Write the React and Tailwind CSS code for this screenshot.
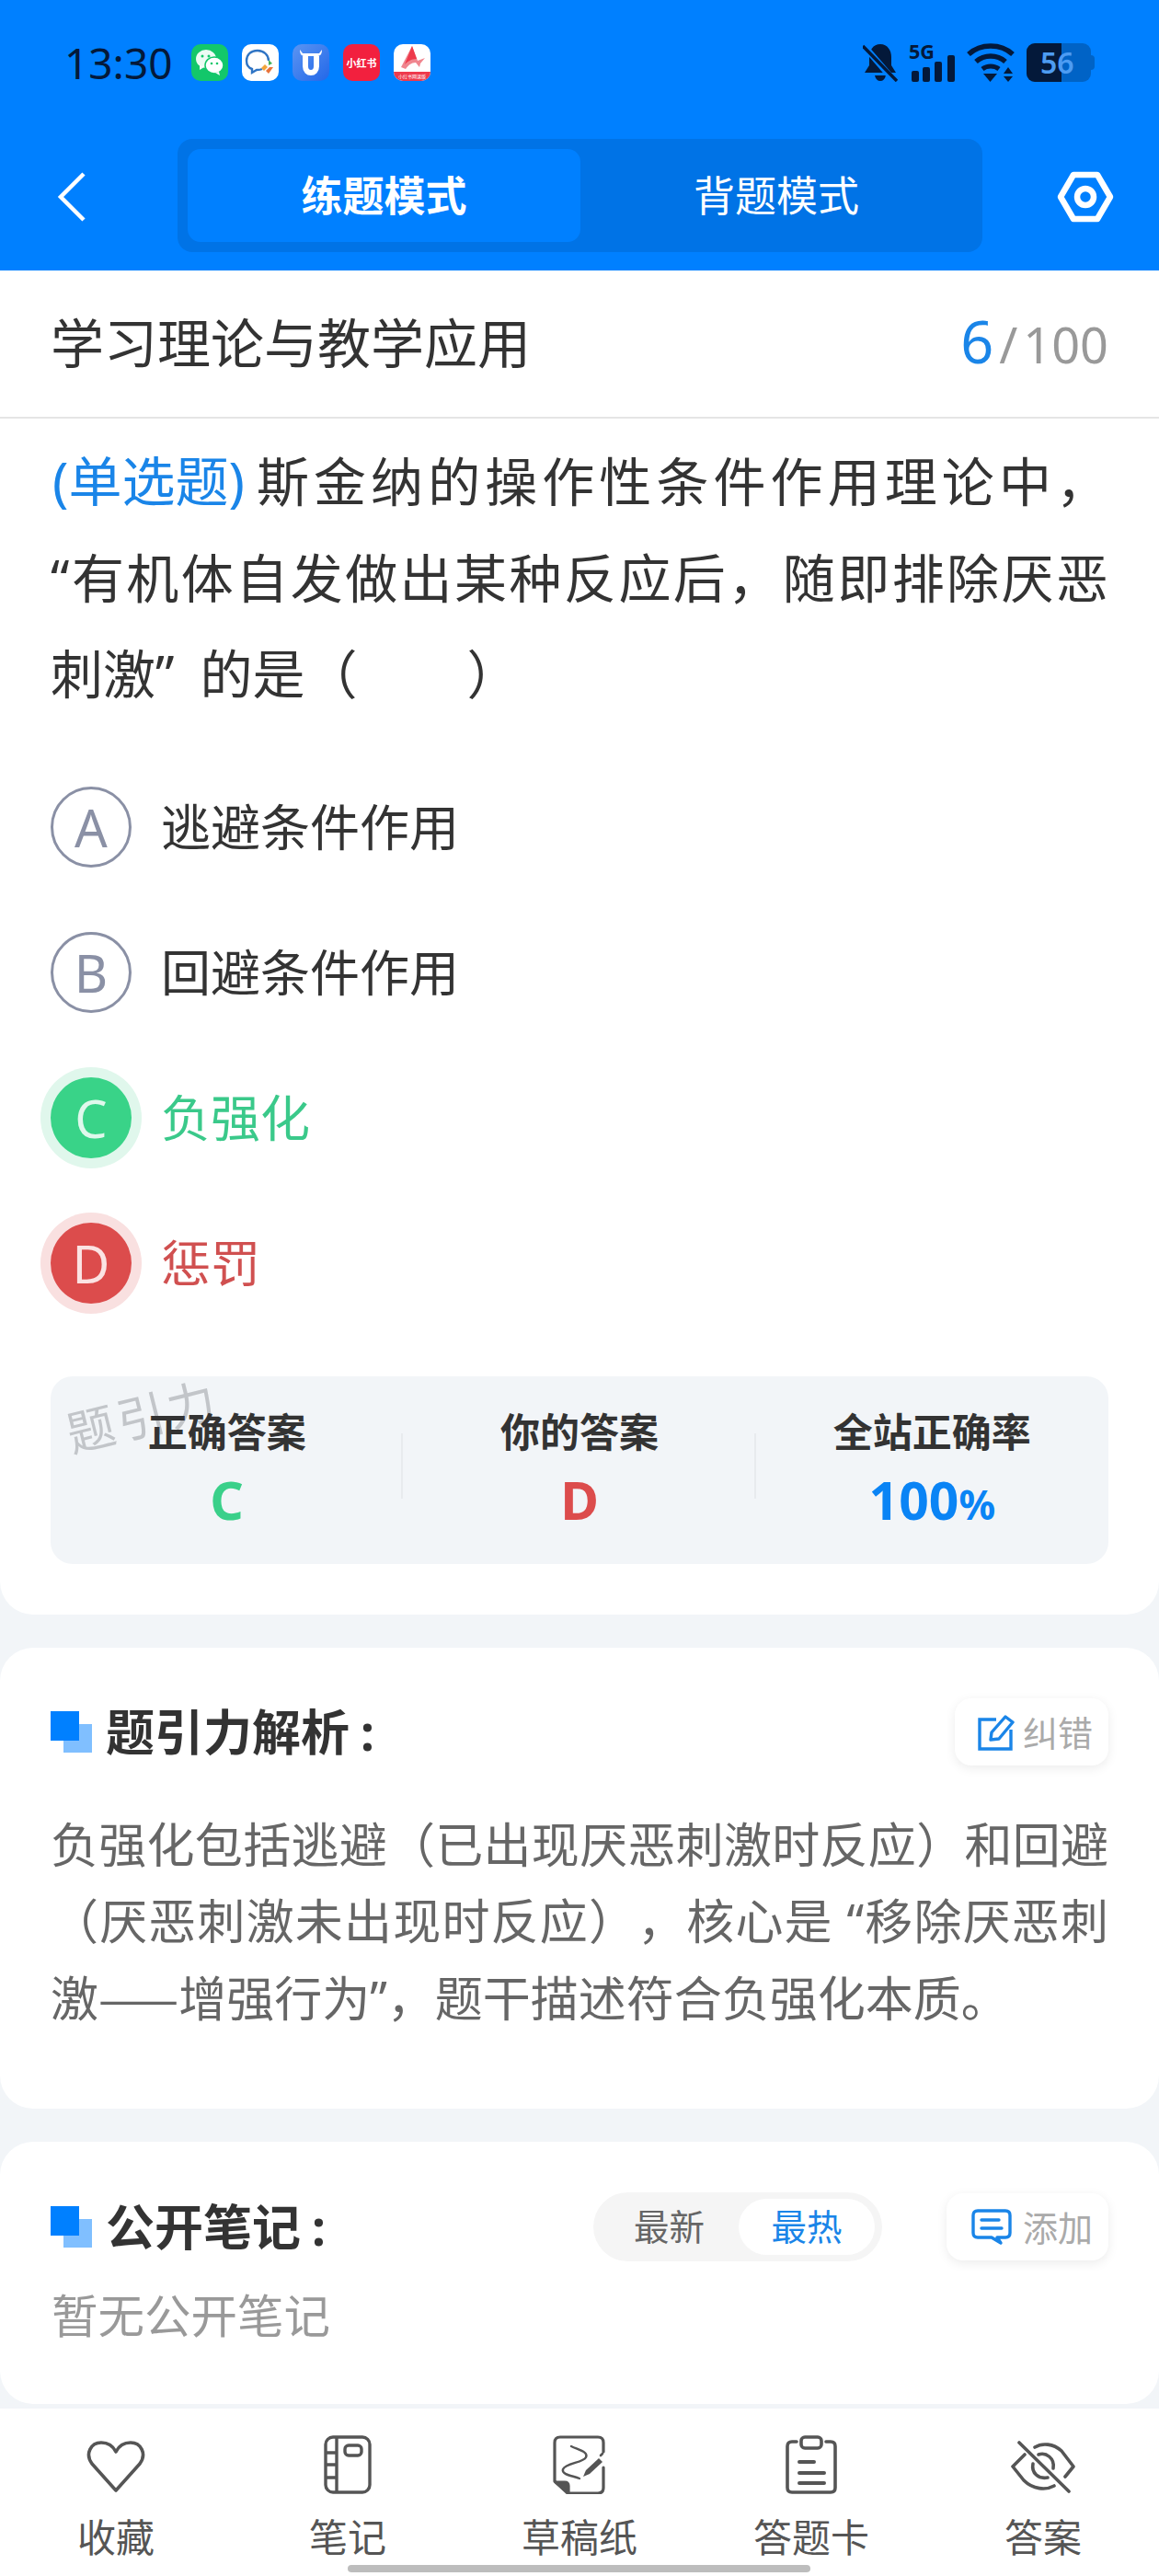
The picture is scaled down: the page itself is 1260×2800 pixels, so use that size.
import React from "react";

const DARK = "#04193a";

function Back() {
  return (
    <svg width="32" height="56" viewBox="0 0 32 56" fill="none">
      <path d="M29 3 L4 28 L29 53" stroke="#fff" strokeWidth="4.5" />
    </svg>
  );
}

function Hex() {
  return (
    <svg width="62" height="56" viewBox="0 0 62 56" fill="none" stroke="#fff" strokeWidth="6.5" strokeLinejoin="round">
      <path d="M4 28 L18 4 H44 L58 28 L44 52 H18 Z" />
      <circle cx="31" cy="28" r="9" />
    </svg>
  );
}

function WeChat() {
  return (
    <div className="w-10 h-10 rounded-[10px] bg-[#13c76a] flex items-center justify-center">
      <svg width="32" height="30" viewBox="0 0 32 30">
        <ellipse cx="12" cy="11" rx="11" ry="10" fill="#fff" opacity="0.92" />
        <path d="M5 18 L5 23 L10 20 Z" fill="#fff" opacity="0.92" />
        <ellipse cx="21" cy="18" rx="10" ry="9" fill="#fff" stroke="#13c76a" strokeWidth="1.5" />
        <path d="M26 25 L27 29 L22 26 Z" fill="#fff" />
        <circle cx="8" cy="8" r="1.5" fill="#13c76a" />
        <circle cx="15" cy="8" r="1.5" fill="#13c76a" />
        <circle cx="18" cy="16" r="1.3" fill="#13c76a" />
        <circle cx="24" cy="16" r="1.3" fill="#13c76a" />
      </svg>
    </div>
  );
}

function QQMail() {
  return (
    <div className="w-10 h-10 rounded-[10px] bg-white flex items-center justify-center">
      <svg width="34" height="32" viewBox="0 0 34 32" fill="none">
        <path d="M14 3 C6 3 2 8 2 14 C2 19 5 22 8 23 L8 27 L13 24 C15 24 17 24 19 23" stroke="#2f74c4" strokeWidth="2.4" />
        <path d="M14 3 C21 3 26 8 26 14" stroke="#2f74c4" strokeWidth="2.4" />
        <path d="M26 13 L30 17 L26 19 Z" fill="#43b05c" />
        <path d="M22 18 L25 21 L21 25 L18 22 Z" fill="#f2a33a" />
        <path d="M27 21 L31 21 L26 28 L23 25 Z" fill="#e8733a" />
      </svg>
    </div>
  );
}

function Cow() {
  return (
    <div className="w-10 h-10 rounded-[10px] bg-gradient-to-br from-[#5a94f2] to-[#2267e8] flex items-center justify-center">
      <svg width="30" height="32" viewBox="0 0 30 32" fill="none">
        <path d="M3 2 C3 7 5 9 8 9 H22 C25 9 27 7 27 2 L24 6 H6 Z" fill="#fff" />
        <path d="M9 9 V20 C9 25 12 27 15 27 C18 27 21 25 21 20 V9" stroke="#fff" strokeWidth="6" />
      </svg>
    </div>
  );
}

function RedBook() {
  return (
    <div className="w-10 h-10 rounded-[10px] bg-[#f2203e] flex items-center justify-center text-white text-[11px] font-bold leading-none whitespace-nowrap">
      小红书
    </div>
  );
}

function RedA() {
  return (
    <div className="w-10 h-10 rounded-[10px] bg-white overflow-hidden flex flex-col">
      <div className="h-[30px] flex items-center justify-center">
        <svg width="30" height="28" viewBox="0 0 30 28">
          <path d="M15 1 L21 17 L29 14 L24 20 L23 24 L19 19 C14 19 11 22 8 26 L3 24 Z" fill="#f0868f" />
          <path d="M15 1 L20 15 C14 15 10 18 7 21 Z" fill="#ee3a4c" />
        </svg>
      </div>
      <div className="h-[10px] bg-[#ee3a4c] text-white text-[5px] leading-[10px] text-center whitespace-nowrap">小红书网课版</div>
    </div>
  );
}

function Bell() {
  return (
    <svg width="38" height="42" viewBox="0 0 38 42">
      <path d="M19 1 C27 1 31 8 31 15 V24 L36 32 H2 L7 24 V15 C7 8 11 1 19 1 Z" fill={DARK} />
      <path d="M13 35 H25 C24 39 22 41 19 41 C16 41 14 39 13 35 Z" fill={DARK} />
      <path d="M4 6 L35 42" stroke="#0080ff" strokeWidth="7" />
      <path d="M0 3 L37 41" stroke={DARK} strokeWidth="3.5" />
    </svg>
  );
}

function Signal() {
  return (
    <svg width="50" height="42" viewBox="0 0 50 42" className="overflow-visible">
      <text x="0" y="17" fontSize="22" fontWeight="700" fill={DARK} fontFamily="'Noto Sans', sans-serif" textLength="28" lengthAdjust="spacingAndGlyphs">5G</text>
      <rect x="3" y="30" width="8" height="12" rx="2" fill={DARK} />
      <rect x="15" y="26" width="8" height="16" rx="2" fill={DARK} />
      <rect x="28" y="20" width="8" height="22" rx="2" fill={DARK} />
      <rect x="42" y="13" width="8" height="29" rx="2" fill={DARK} />
    </svg>
  );
}

function Wifi() {
  return (
    <svg width="54" height="42" viewBox="0 0 54 42" fill="none">
      <path d="M3 12 C16 0 38 0 51 12" stroke={DARK} strokeWidth="5.5" />
      <path d="M11 20 C20 12 34 12 43 20" stroke={DARK} strokeWidth="5.5" />
      <path d="M18 28 C23 24 31 24 36 28" stroke={DARK} strokeWidth="5" />
      <path d="M19 33 H34 L26.5 42 Z" fill={DARK} />
      <path d="M41 33 L46 26 L51 33 Z" fill={DARK} />
      <path d="M41 36 H51 L46 42 Z" fill={DARK} />
    </svg>
  );
}

function Battery() {
  return (
    <div className="relative w-[74px] h-[42px] flex items-center">
      <div className="w-[70px] h-[42px] rounded-[9px] overflow-hidden flex bg-[#0063c6]">
        <div className="w-[38px] h-full bg-[#04193a]" />
      </div>
      <div className="w-1 h-[16px] rounded-r bg-[#0063c6]" />
      <span className="absolute left-[15px] top-0 h-[42px] leading-[42px] text-[32px] font-semibold text-[#4d9cf2]">56</span>
    </div>
  );
}

function EditIcon() {
  return (
    <svg width="40" height="40" viewBox="0 0 40 40" fill="none" stroke="#1a85e8" strokeWidth="3.4">
      <path d="M20 6 H2 V38 H36 V17" />
      <path d="M15 20 L30 3 L38 9 L23 27 L14 28 Z" strokeLinejoin="round" />
    </svg>
  );
}

function CommentIcon() {
  return (
    <svg width="44" height="40" viewBox="0 0 44 40" fill="none" stroke="#1a85e8" strokeWidth="3.4" strokeLinecap="round" strokeLinejoin="round">
      <path d="M7 2 H37 Q42 2 42 7 V26 Q42 31 37 31 H28 L32 37 L22 31 H7 Q2 31 2 26 V7 Q2 2 7 2 Z" />
      <path d="M11 12 H30 M11 21 H33" />
    </svg>
  );
}

function Heart() {
  return (
    <svg width="66" height="58" viewBox="0 0 66 58" fill="none" stroke="#555" strokeWidth="3.6" strokeLinejoin="round">
      <path d="M33 55 L7 26 C-1 15 6 3 17 3 C24 3 30 7 33 13 C36 7 42 3 49 3 C60 3 67 15 59 26 Z" />
    </svg>
  );
}

function Notebook() {
  return (
    <svg width="52" height="64" viewBox="0 0 52 64" fill="none" stroke="#555" strokeWidth="3.4">
      <rect x="2" y="2" width="48" height="60" rx="8" />
      <path d="M14 2 V62 M2 19 H14 M2 32 H14 M2 46 H14" />
      <rect x="23" y="11" width="18" height="11" rx="4" />
    </svg>
  );
}

function Draft() {
  return (
    <svg width="58" height="64" viewBox="0 0 58 64" fill="none" stroke="#555" strokeWidth="3.2" strokeLinejoin="round" strokeLinecap="round">
      <path d="M55 18 V8 Q55 2 49 2 H8 Q2 2 2 8 V50 L16 63 H49 Q55 63 55 57 V35" />
      <path d="M3 51 H13 Q17 51 17 55 V62 Z" fill="#555" />
      <path d="M20 12 C28 16 39 18 36 24 C33 30 14 30 11 37 C9 43 22 44 29 47" strokeWidth="2.4" />
      <path d="M33 45 L36 38 L50 25 L54 29 L40 42 Z" fill="#555" stroke="none" />
      <path d="M52 22 L54 20" strokeWidth="2.6" />
    </svg>
  );
}

function Clipboard() {
  return (
    <svg width="56" height="64" viewBox="0 0 56 64" fill="none" stroke="#555" strokeWidth="3.6" strokeLinecap="round" strokeLinejoin="round">
      <path d="M12 7 H7 Q2 7 2 12 V57 Q2 62 7 62 H49 Q54 62 54 57 V12 Q54 7 49 7 H44" />
      <rect x="17" y="2" width="22" height="12" rx="4" />
      <path d="M15 29 H31 M15 41 H42 M15 52 H42" strokeWidth="4" />
    </svg>
  );
}

function EyeOff() {
  return (
    <svg width="70" height="58" viewBox="0 0 70 58" fill="none" stroke="#555" strokeWidth="3.6" strokeLinecap="round" strokeLinejoin="round">
      <path d="M9 3 L63 56" />
      <path d="M26 8 C34 3 46 4 55 12 L68 29 L59 40" />
      <path d="M15 16 L2 29 L14 44 C24 54 38 55 47 50" />
      <path d="M30 16 C38 13 48 20 46 31" />
      <path d="M24 26 C22 36 30 43 40 41" />
    </svg>
  );
}

function SectionIcon() {
  return (
    <div className="relative w-[45px] h-[45px] shrink-0">
      <div className="absolute left-[14px] top-[14px] w-[31px] h-[31px] bg-[#80bfff]" />
      <div className="absolute left-0 top-0 w-[31px] h-[32px] bg-[#0080ff]" />
    </div>
  );
}

function Option({ letter, text, state }) {
  const circle =
    state === "right"
      ? "bg-[#39d388] text-[#dff8ec] shadow-[0_0_0_11px_#e0f7ec]"
      : state === "wrong"
      ? "bg-[#dc4c4c] text-[#fbe3e3] shadow-[0_0_0_11px_#f9e0e0]"
      : "border-[3px] border-[#8a90a5] text-[#8a90a5]";
  const label = state === "right" ? "text-[#3ac98a]" : state === "wrong" ? "text-[#d05050]" : "text-[#333]";
  return (
    <div className="h-[158px] flex items-center">
      <div className={`w-[88px] h-[88px] rounded-full flex items-center justify-center text-[56px] leading-none ${circle}`}>{letter}</div>
      <div className={`ml-[32px] text-[54px] leading-none ${label}`}>{text}</div>
    </div>
  );
}

function Stat({ label, children, divider }) {
  return (
    <div className="relative flex flex-col items-center">
      <div className="mt-[35px] h-[52px] leading-[52px] text-[43px] font-bold text-[#333]">{label}</div>
      <div className="mt-[14px] h-[66px] leading-[66px] text-[57px] font-bold">{children}</div>
      {divider && <div className="absolute right-0 top-[62px] w-[2px] h-[71px] bg-[#e8ebee]" />}
    </div>
  );
}

function NavItem({ icon, label, iconClass }) {
  return (
    <div className="flex flex-col items-center">
      <div className={`h-[64px] flex justify-center ${iconClass}`}>{icon}</div>
      <div className="mt-[22px] h-[50px] leading-[50px] text-[42px] text-[#555]">{label}</div>
    </div>
  );
}

export default function App() {
  return (
    <div className="w-[1260px] h-[2800px] overflow-hidden relative flex flex-col bg-[#f2f5f8] font-['Noto_Sans','Noto_Sans_CJK_SC',sans-serif] [text-spacing-trim:space-all]">
      <header className="h-[294px] bg-[#0080ff] shrink-0">
        <div className="h-[136px] pl-[70px] pr-[70px] flex items-center justify-between">
          <div className="flex items-center">
            <span className="text-[46px] leading-none text-[#04193a] w-[138px]">13:30</span>
            <div className="flex gap-[15px]">
              <WeChat />
              <QQMail />
              <Cow />
              <RedBook />
              <RedA />
            </div>
          </div>
          <div className="flex items-center gap-[12px]">
            <Bell />
            <Signal />
            <Wifi />
            <Battery />
          </div>
        </div>
        <div className="h-[155px] flex items-center">
          <div className="w-[193px] pl-[62px] shrink-0 flex items-center">
            <Back />
          </div>
          <div className="w-[875px] h-[123px] rounded-[16px] bg-[#0073e6] p-[11px] flex shrink-0 -mt-[2px]">
            <div className="w-[427px] h-full rounded-[14px] bg-[#0080ff] flex items-center justify-center text-white font-bold text-[45px]">练题模式</div>
            <div className="flex-1 h-full flex items-center justify-center text-white text-[45px]">背题模式</div>
          </div>
          <div className="flex-1 flex justify-center pl-[32px]">
            <Hex />
          </div>
        </div>
      </header>

      <section className="bg-white rounded-b-[36px] h-[1461px] shrink-0">
        <div className="h-[161px] px-[55px] flex items-center justify-between border-b-2 border-[#e5e5e5]">
          <div className="text-[58px] leading-none text-[#333] pb-[2px]">学习理论与教学应用</div>
          <div className="flex items-baseline pb-[7px]">
            <span className="text-[63px] leading-none text-[#1a85e8]">6</span>
            <span className="text-[54px] leading-none text-[#999] ml-[6px]">/</span>
            <span className="text-[54px] leading-none text-[#999] ml-[6px]">100</span>
          </div>
        </div>
        <div className="px-[55px]">
          <div className="pt-[16px] text-[57px] leading-[104.5px] text-[#333]">
            <div className="text-justify [text-align-last:justify]">
              <span className="inline-block text-[#1a85e8] ml-[2px] mr-[8px] text-[58px]">(单选题)</span>斯金纳的操作性条件作用理论中，
            </div>
            <div className="text-justify [text-align-last:justify] whitespace-nowrap">“有机体自发做出某种反应后，随即排除厌恶</div>
            <div className="flex">
              <span>刺激”</span>
              <span className="ml-[28px]">的是（</span>
              <span className="w-[119px]" />
              <span>）</span>
            </div>
          </div>
          <div className="mt-[35px]">
            <Option letter="A" text="逃避条件作用" />
            <Option letter="B" text="回避条件作用" />
            <Option letter="C" text="负强化" state="right" />
            <Option letter="D" text="惩罚" state="wrong" />
          </div>
          <div className="relative mt-[44px] h-[204px] rounded-[24px] bg-[#f2f5f8] grid grid-cols-3">
            <div className="absolute left-[16px] top-[17px] text-[52px] leading-none tracking-[4px] text-[#c2c5c9] -rotate-[14deg]">题引力</div>
            <Stat label="正确答案" divider><span className="text-[#3ad08a]">C</span></Stat>
            <Stat label="你的答案" divider><span className="text-[#dc4c4c]">D</span></Stat>
            <Stat label="全站正确率">
              <span className="text-[#0a84f5]">100<span className="text-[44px]">%</span></span>
            </Stat>
          </div>
        </div>
      </section>

      <section className="mt-[36px] h-[501px] shrink-0 bg-white rounded-[36px] px-[55px] pt-[55px]">
        <div className="h-[73px] flex items-center justify-between">
          <div className="flex items-center">
            <SectionIcon />
            <div className="ml-[15px] text-[53px] leading-none font-bold text-[#333]">题引力解析<span className="ml-[12px]">:</span></div>
          </div>
          <div className="w-[167px] h-[73px] rounded-[18px] bg-white shadow-[0_3px_12px_rgba(0,0,0,0.08)] flex items-center pl-[25px]">
            <EditIcon />
            <span className="ml-[9px] text-[38px] leading-none text-[#aaa]">纠错</span>
          </div>
        </div>
        <div className="mt-[45px] text-[52px] leading-[82.5px] text-[#666]">
          <div className="text-justify [text-align-last:justify] whitespace-nowrap">负强化包括逃避（已出现厌恶刺激时反应）和回避</div>
          <div className="text-justify [text-align-last:justify] whitespace-nowrap">（厌恶刺激未出现时反应），核心是 “移除厌恶刺</div>
          <div className="whitespace-nowrap">激<span className="font-['Noto_Sans_CJK_SC',sans-serif]">——</span>增强行为”，题干描述符合负强化本质。</div>
        </div>
      </section>

      <section className="mt-[36px] h-[285px] shrink-0 bg-white rounded-[36px] px-[55px] pt-[55px]">
        <div className="h-[75px] flex items-center">
          <SectionIcon />
          <div className="ml-[15px] text-[53px] leading-none font-bold text-[#333]">公开笔记<span className="ml-[12px]">:</span></div>
          <div className="ml-auto w-[314px] h-[75px] rounded-full bg-[#f5f5f5] p-[7px] pr-[8px] flex items-center">
            <div className="flex-1 text-center text-[38.5px] leading-none text-[#666]">最新</div>
            <div className="w-[148px] h-[61px] rounded-full bg-white flex items-center justify-center text-[38.5px] text-[#1a85e8]">最热</div>
          </div>
          <div className="ml-[70px] w-[176px] h-[73px] rounded-[18px] bg-white shadow-[0_3px_12px_rgba(0,0,0,0.08)] flex items-center pl-[27px]">
            <CommentIcon />
            <span className="ml-[12px] text-[38px] leading-none text-[#aaa]">添加</span>
          </div>
        </div>
        <div className="mt-[30px] h-[58px] leading-[58px] text-[50.5px] text-[#999] pl-[1px]">暂无公开笔记</div>
      </section>

      <nav className="mt-[5px] flex-1 bg-white grid grid-cols-5 pt-[29px]">
        <NavItem icon={<Heart />} label="收藏" iconClass="pt-[5px]" />
        <NavItem icon={<Notebook />} label="笔记" />
        <NavItem icon={<Draft />} label="草稿纸" />
        <NavItem icon={<Clipboard />} label="答题卡" />
        <NavItem icon={<EyeOff />} label="答案" iconClass="pt-[5px]" />
      </nav>
      <div className="absolute left-[378px] top-[2788px] w-[503px] h-[8px] rounded-full bg-[#bdbdbd]" />
    </div>
  );
}
